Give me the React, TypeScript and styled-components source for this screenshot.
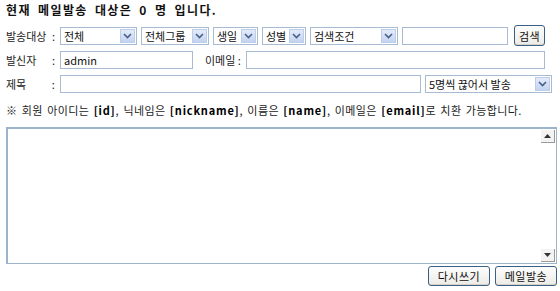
import React from "react";
import styled, { createGlobalStyle } from "styled-components";

const Global = createGlobalStyle`
  html, body { margin: 0; padding: 0; background: #fff; }
  body { font-family: "Noto Sans CJK KR", "Noto Sans", sans-serif; font-size: 11px; color: #222; }
  * { box-sizing: border-box; }
`;

const Page = styled.div`
  width: 560px;
  height: 291px;
  padding: 3px 4px 0 6px;
  display: flex;
  flex-direction: column;
`;

const Title = styled.div`
  font-weight: bold;
  font-size: 12px;
  line-height: 14px;
  height: 14px;
  color: #111;
  letter-spacing: 1.4px;
  word-spacing: 3px;
`;

const Row = styled.div<{ $h: number; $mt: number }>`
  display: flex;
  align-items: center;
  height: ${(p) => p.$h}px;
  margin-top: ${(p) => p.$mt}px;
  white-space: nowrap;
`;

const LabelName = styled.span`
  width: 46px;
  line-height: 14px;
`;

const Colon = styled.span`
  width: 8px;
`;

const Input = styled.div<{ $w: number }>`
  width: ${(p) => p.$w}px;
  height: 18px;
  border: 1px solid #a7bbd3;
  background: #fff;
  padding: 0 3px;
  line-height: 16px;
  font-family: "Noto Sans CJK KR", sans-serif;
  font-size: 11px;
  color: #111;
  margin-right: 4px;
`;

const Select = styled.div<{ $w: number }>`
  width: ${(p) => p.$w}px;
  height: 18px;
  border: 1px solid #a7bbd3;
  background: #fff;
  display: flex;
  align-items: center;
  justify-content: space-between;
  padding: 0 1px 0 3px;
  margin-right: 4px;
  font-size: 11px;
  color: #111;
`;

const Arrow = styled.span`
  width: 15px;
  height: 14px;
  border: 1px solid #bdcdea;
  background: linear-gradient(#e3ebfa, #c3d3f1);
  display: flex;
  align-items: center;
  justify-content: center;
`;

const Button = styled.div<{ $w: number }>`
  width: ${(p) => p.$w}px;
  height: 20px;
  border: 1px solid #3c5f86;
  border-radius: 3px;
  background: linear-gradient(#fdfdfd, #ecebe6);
  box-shadow: inset 0 -1px 0 #d6d2c6;
  display: flex;
  align-items: center;
  justify-content: center;
  font-size: 11px;
  color: #111;
  letter-spacing: 0.5px;
`;

const SearchButton = styled(Button)`
  height: 21px;
  margin-left: 2px;
  align-self: flex-start;
`;

const Spacer = styled.span<{ $w: number }>`
  width: ${(p) => p.$w}px;
`;

const Notice = styled.div`
  margin-top: 10px;
  line-height: 14px;
  font-size: 11px;
  white-space: nowrap;
  letter-spacing: 0.4px;
  word-spacing: 1.5px;
  b { font-weight: bold; color: #000; letter-spacing: 0.8px; }
`;

const TextArea = styled.div`
  margin-top: 10px;
  width: 551px;
  height: 137px;
  border: 1px solid #9cb3cc;
  border-left: 2px solid #9cb3cc;
  border-top: 2px solid #9cb3cc;
  display: flex;
  justify-content: flex-end;
  background: #fff;
`;

const Scrollbar = styled.div`
  width: 15px;
  padding: 1px 0;
  display: flex;
  flex-direction: column;
  justify-content: space-between;
`;

const ScrollBtn = styled.span`
  width: 14px;
  height: 13px;
  background: #f3f3f3;
  border-right: 1px solid #9a9a9a;
  border-bottom: 1px solid #9a9a9a;
  display: flex;
  align-items: center;
  justify-content: center;
`;

const Footer = styled.div`
  display: flex;
  justify-content: flex-end;
  gap: 5px;
  margin-top: 2px;
  width: 551px;
`;

const Chevron = () => (
  <svg width="9" height="6" viewBox="0 0 9 6">
    <path d="M1 1 L4.5 4.5 L8 1" fill="none" stroke="#4a5f86" strokeWidth="1.6" />
  </svg>
);

const Tri = ({ up }: { up?: boolean }) => (
  <svg width="7" height="4" viewBox="0 0 7 4">
    <path d={up ? "M0 4 L3.5 0 L7 4 Z" : "M0 0 L3.5 4 L7 0 Z"} fill="#333" />
  </svg>
);

const Sel = ({ w, label }: { w: number; label: string }) => (
  <Select $w={w}>
    <span>{label}</span>
    <Arrow>
      <Chevron />
    </Arrow>
  </Select>
);

export default function App() {
  return (
    <Page>
      <Global />
      <Title>현재 메일발송 대상은 0 명 입니다.</Title>
      <Row $h={22} $mt={8}>
        <LabelName>발송대상</LabelName>
        <Colon>:</Colon>
        <Sel w={77} label="전체" />
        <Sel w={68} label="전체그룹" />
        <Sel w={45} label="생일" />
        <Sel w={44} label="성별" />
        <Sel w={88} label="검색조건" />
        <Input $w={106} />
        <SearchButton $w={31}>검색</SearchButton>
      </Row>
      <Row $h={18} $mt={4}>
        <LabelName>발신자</LabelName>
        <Colon>:</Colon>
        <Input $w={133}>admin</Input>
        <Spacer $w={8} />
        <span>이메일 :</span>
        <Spacer $w={5} />
        <Input $w={299} />
      </Row>
      <Row $h={19} $mt={5}>
        <LabelName>제목</LabelName>
        <Colon>:</Colon>
        <Input $w={364} />
        <Sel w={128} label="5명씩 끊어서 발송" />
      </Row>
      <Notice>
        ※ 회원 아이디는 <b>[id]</b>, 닉네임은 <b>[nickname]</b>, 이름은 <b>[name]</b>, 이메일은{" "}
        <b>[email]</b>로 치환 가능합니다.
      </Notice>
      <TextArea>
        <Scrollbar>
          <ScrollBtn>
            <Tri up />
          </ScrollBtn>
          <ScrollBtn>
            <Tri />
          </ScrollBtn>
        </Scrollbar>
      </TextArea>
      <Footer>
        <Button $w={62}>다시쓰기</Button>
        <Button $w={62}>메일발송</Button>
      </Footer>
    </Page>
  );
}
